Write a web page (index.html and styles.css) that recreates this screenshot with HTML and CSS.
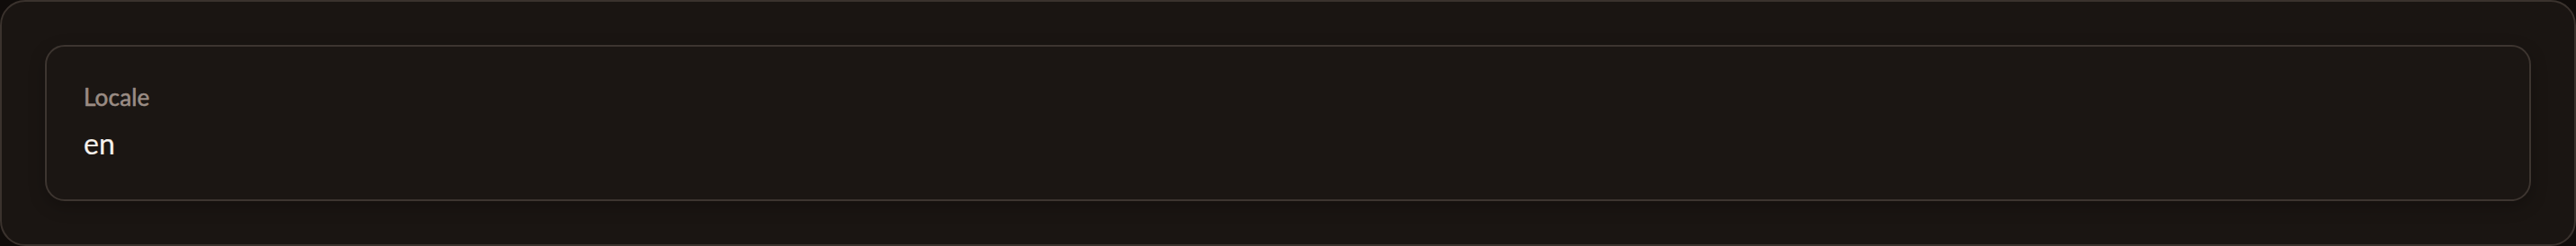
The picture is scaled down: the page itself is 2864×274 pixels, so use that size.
FILE: index.html
```html
<!DOCTYPE html>
<html lang="en">
<head>
<meta charset="utf-8">
<title>Locale</title>
<link rel="stylesheet" href="styles.css">
</head>
<body>
<section class="panel">
  <div class="field">
    <div class="field-label">Locale</div>
    <div class="field-value">en</div>
  </div>
</section>
</body>
</html>
```
FILE: styles.css
```css
html, body {
  margin: 0;
  padding: 0;
  background: #100c0a;
}
body {
  font-family: Lato, "Noto Sans", sans-serif;
}
.panel {
  box-sizing: border-box;
  height: 274px;
  margin: 0;
  padding: 48px;
  background: #1a1512;
  border: 2px solid #3a322d;
  border-radius: 28px;
}
.field {
  box-sizing: border-box;
  height: 174px;
  padding: 38px 41px 30px;
  background: #1b1613;
  border: 2px solid #3d3530;
  border-radius: 22px;
  box-shadow: 0 6px 18px rgba(0, 0, 0, 0.25);
  display: flex;
  flex-direction: column;
  gap: 14px;
}
.field-label {
  font-size: 26px;
  line-height: 36px;
  font-weight: 400;
  color: #9a8c84;
  -webkit-text-stroke: 0.6px #9a8c84;
  letter-spacing: 0.2px;
}
.field-value {
  font-size: 32px;
  line-height: 40px;
  color: #f6f1ec;
  -webkit-text-stroke: 0.2px #f6f1ec;
}
```
